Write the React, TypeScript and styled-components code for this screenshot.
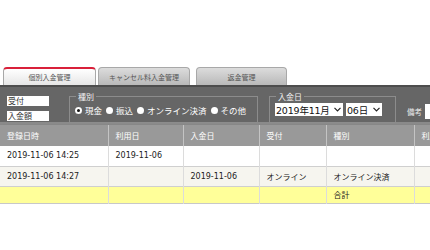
import styled, { createGlobalStyle } from "styled-components";

const GlobalStyle = createGlobalStyle`
  html, body {
    margin: 0;
    padding: 0;
    background: #ffffff;
    overflow: hidden;
  }
  body {
    font-family: "DejaVu Sans", "Noto Sans CJK JP", sans-serif;
  }
`;

const Page = styled.div`
  width: 520px;
  padding-top: 66px;
`;

const TabBar = styled.div`
  display: flex;
  align-items: flex-end;
  gap: 2px;
  padding-left: 3px;
  height: 19px;
`;

const Tab = styled.div<{ $active?: boolean; $width: number; $offset?: number }>`
  display: flex;
  align-items: center;
  justify-content: center;
  width: ${({ $width }) => $width}px;
  height: 18px;
  margin-left: ${({ $offset }) => ($offset ? `${$offset}px` : "0")};
  border: 1px solid #a8a8a8;
  border-bottom: none;
  border-radius: 4px 4px 0 0;
  border-top: ${({ $active }) => ($active ? "2px solid #d9203a" : "1px solid #a8a8a8")};
  background: ${({ $active }) =>
    $active
      ? "linear-gradient(#ffffff, #e6e6e6)"
      : "linear-gradient(#dcdcdc, #b9b9b9)"};
  color: #555;
  font-size: 7px;
  font-family: "Noto Sans CJK JP", sans-serif;
  box-sizing: border-box;
`;

const Panel = styled.div`
  display: flex;
  align-items: flex-start;
  height: 40px;
  padding: 6px 0 0 7px;
  box-sizing: border-box;
  background: #666666;
  border-top: 2px solid #4d4d4d;
  border-bottom: 3px solid #8a8a8a;
`;

const InputStack = styled.div`
  display: flex;
  flex-direction: column;
  flex-shrink: 0;
  gap: 5px;
  margin-top: 3px;
  margin-right: 20px;
`;

const TextBox = styled.div<{ $width: number }>`
  width: ${({ $width }) => $width}px;
  height: 10px;
  background: #ffffff;
  font-size: 8px;
  line-height: 10px;
  padding-left: 1px;
  color: #333;
  font-family: "Noto Sans CJK JP", sans-serif;
`;

const Fieldset = styled.fieldset<{ $width: number; $gap: number }>`
  flex: 0 0 ${({ $width }) => $width}px;
  width: ${({ $width }) => $width}px;
  min-width: ${({ $width }) => $width}px;
  height: 31px;
  margin: 0 11px 0 0;
  padding: 0 0 0 5px;
  box-sizing: border-box;
  border: 1px solid #8c8c8c;
  display: flex;
  align-items: flex-start;
  gap: ${({ $gap }) => $gap}px;
  color: #ffffff;
  font-size: 8px;
  font-family: "Noto Sans CJK JP", sans-serif;
  position: relative;
  top: -1px;
`;

const Legend = styled.legend`
  padding: 0 2px;
  margin-left: 1px;
  font-size: 8px;
  line-height: 9px;
  color: #f2f2f2;
`;

const RadioItem = styled.label`
  display: flex;
  align-items: center;
  gap: 3px;
  margin-top: 3px;
  white-space: nowrap;
  color: #ffffff;
  font-size: 8.5px;
`;

const RadioDot = styled.span<{ $checked?: boolean }>`
  width: 7px;
  height: 7px;
  border-radius: 50%;
  background: #ffffff;
  box-sizing: border-box;
  box-shadow: ${({ $checked }) => ($checked ? "inset 0 0 0 2px #fff, inset 0 0 0 4px #111" : "none")};
`;

const SelectBox = styled.div<{ $width: number }>`
  display: flex;
  align-items: center;
  justify-content: space-between;
  width: ${({ $width }) => $width}px;
  height: 13px;
  margin-top: 2px;
  padding: 0 2px 0 1px;
  box-sizing: border-box;
  background: #ffffff;
  color: #111;
  font-size: 9.5px;
  font-family: "DejaVu Sans", "Noto Sans CJK JP", sans-serif;
  letter-spacing: -0.2px;
`;

const Chevron = () => (
  <svg width="7" height="5" viewBox="0 0 7 5">
    <path d="M0.5 0.8 L3.5 3.8 L6.5 0.8" fill="none" stroke="#222" strokeWidth="1.2" />
  </svg>
);

const Remark = styled.div`
  display: flex;
  align-items: center;
  flex-shrink: 0;
  gap: 3px;
  margin-top: 11px;
  color: #eeeeee;
  font-size: 7.5px;
  font-family: "Noto Sans CJK JP", sans-serif;
`;

const RemarkInput = styled.div`
  width: 60px;
  height: 15px;
  background: #ffffff;
`;

const Table = styled.table`
  border-collapse: collapse;
  width: 520px;
  table-layout: fixed;
  box-shadow: 0 2px 3px rgba(0, 0, 0, 0.3);
`;

const HeadCell = styled.th<{ $width?: number }>`
  width: ${({ $width }) => ($width ? `${$width}px` : "auto")};
  height: 21px;
  padding: 0 0 0 7px;
  box-sizing: border-box;
  background: #999999;
  color: #ffffff;
  font-weight: normal;
  text-align: left;
  font-size: 8px;
  font-family: "Noto Sans CJK JP", sans-serif;
  border-right: 1px solid #c4c4c4;
  white-space: nowrap;
`;

const Row = styled.tr<{ $tone: "white" | "cream" | "yellow" }>`
  background: ${({ $tone }) =>
    $tone === "white" ? "#ffffff" : $tone === "cream" ? "#f6f5ef" : "#ffff99"};
  height: ${({ $tone }) => ($tone === "yellow" ? "17px" : "20px")};
  border-bottom: 1px solid ${({ $tone }) => ($tone === "yellow" ? "#c8c8c8" : "#cfcfcf")};
`;

const Cell = styled.td`
  padding: 0 0 0 7px;
  color: #222;
  font-size: 8px;
  font-family: "DejaVu Sans", "Noto Sans CJK JP", sans-serif;
  border-right: 1px solid #dcdcdc;
  white-space: nowrap;
  overflow: hidden;
`;

const widths = [108, 75, 76, 67, 88];
const headers = ["登録日時", "利用日", "入金日", "受付", "種別", "利用"];

const rows: { tone: "white" | "cream" | "yellow"; cells: string[] }[] = [
  { tone: "white", cells: ["2019-11-06 14:25", "2019-11-06", "", "", "", ""] },
  { tone: "cream", cells: ["2019-11-06 14:27", "", "2019-11-06", "オンライン", "オンライン決済", ""] },
  { tone: "yellow", cells: ["", "", "", "", "合計", ""] },
];

export default function App() {
  return (
    <Page>
      <GlobalStyle />
      <TabBar>
        <Tab $active $width={93}>個別入金管理</Tab>
        <Tab $width={92}>キャンセル料入金管理</Tab>
        <Tab $width={91} $offset={4}>返金管理</Tab>
      </TabBar>
      <Panel>
        <InputStack>
          <TextBox $width={41}>受付</TextBox>
          <TextBox $width={41}>入金額</TextBox>
        </InputStack>
        <Fieldset $width={189} $gap={4}>
          <Legend>種別</Legend>
          <RadioItem>
            <RadioDot $checked />
            現金
          </RadioItem>
          <RadioItem>
            <RadioDot />
            振込
          </RadioItem>
          <RadioItem>
            <RadioDot />
            オンライン決済
          </RadioItem>
          <RadioItem>
            <RadioDot />
            その他
          </RadioItem>
        </Fieldset>
        <Fieldset $width={127} $gap={3}>
          <Legend>入金日</Legend>
          <SelectBox $width={68}>
            2019年11月
            <Chevron />
          </SelectBox>
          <SelectBox $width={36}>
            06日
            <Chevron />
          </SelectBox>
        </Fieldset>
        <Remark>
          備考
          <RemarkInput />
        </Remark>
      </Panel>
      <Table>
        <thead>
          <tr>
            {headers.map((h, i) => (
              <HeadCell key={h} $width={widths[i]}>
                {h}
              </HeadCell>
            ))}
          </tr>
        </thead>
        <tbody>
          {rows.map((r, i) => (
            <Row key={i} $tone={r.tone}>
              {r.cells.map((c, j) => (
                <Cell key={j}>{c}</Cell>
              ))}
            </Row>
          ))}
        </tbody>
      </Table>
    </Page>
  );
}
